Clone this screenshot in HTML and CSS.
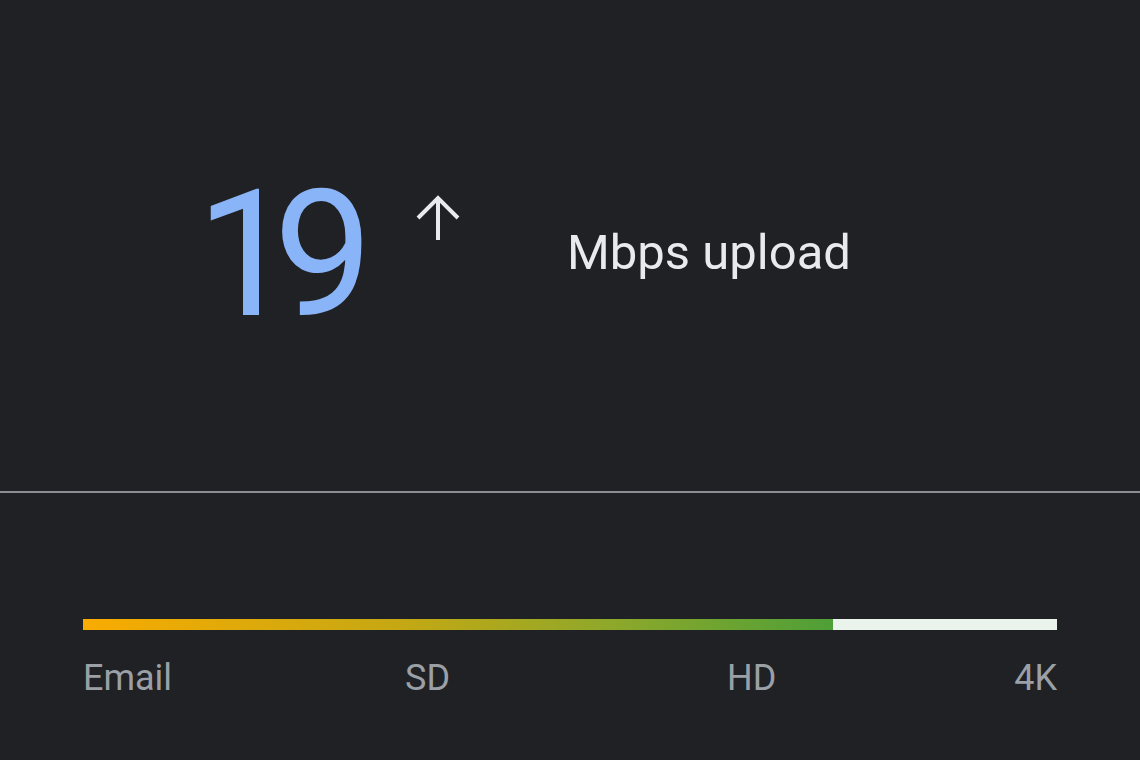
FILE: index.html
```html
<!DOCTYPE html>
<html lang="en">
  <head>
    <meta charset="utf-8">
    <title>upload speed</title>
    <link rel="stylesheet" href="styles.css">
  </head>
  <body>

    <section class="reading">
      <span class="speed">19</span>
      <svg class="arrow" width="52" height="52" viewBox="0 0 52 52">
        <path d="M26 6 V48 M6 26 L26 6 L46 26" />
      </svg>
      <span class="unit">Mbps upload</span>
    </section>

    <hr class="divider">

    <section class="scale">
      <div class="bar"></div>
      <div class="labels">
        <span>Email</span>
        <span>SD</span>
        <span>HD</span>
        <span>4K</span>
      </div>
    </section>

  </body>
</html>
```

FILE: styles.css
```css
* { box-sizing: border-box; }

body {
  margin: 0;
  background-color: #202124;
  font-family: 'Roboto', 'Liberation Sans', sans-serif;
  overflow: hidden;
}

.reading {
  display: flex;
  align-items: flex-start;
  height: 491px;
  padding: 166px 0 0 196px;
}

.speed {
  width: 200px;
  font-size: 177px;
  line-height: 1;
  color: #8ab4f8;
  letter-spacing: -22px;
}

.arrow {
  margin: 26px 0 0 16px;
}

.arrow path {
  fill: none;
  stroke: #e8eaed;
  stroke-width: 4;
}

.unit {
  margin: 62px 0 0 103px;
  font-size: 49px;
  line-height: 1;
  color: #e8eaed;
}

.divider {
  margin: 0;
  border: none;
  height: 2px;
  background-color: #8a8d91;
}

.scale {
  padding: 126px 83px 0 83px;
}

.bar {
  height: 11px;
  background: linear-gradient(to right,
    #f9ab00 0%,
    #c4a814 33%,
    #8ca82b 55%,
    #4e9f37 77%,
    #eaf3ec 77%,
    #eaf3ec 100%);
}

.labels {
  display: grid;
  grid-template-columns: 322px 322px 1fr auto;
  margin-top: 30px;
  font-size: 36px;
  line-height: 1;
  color: #9aa0a6;
}
```
